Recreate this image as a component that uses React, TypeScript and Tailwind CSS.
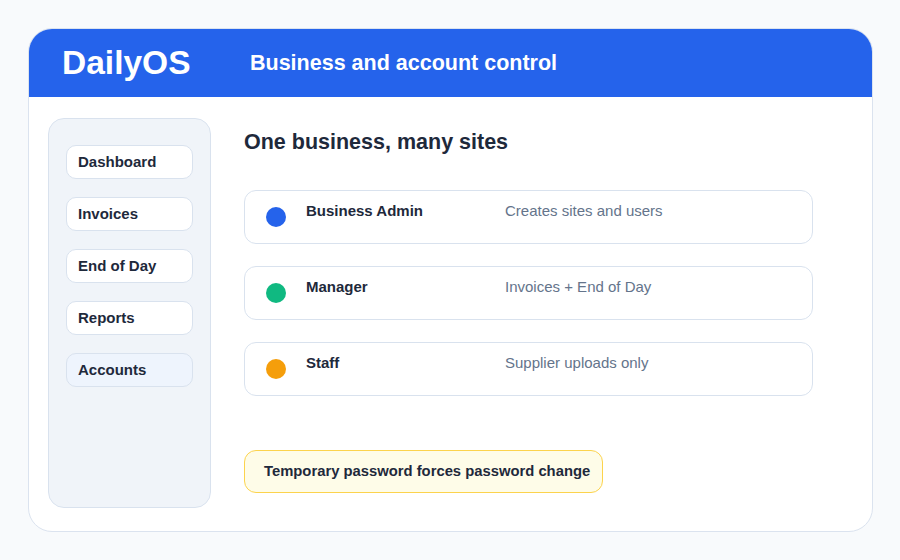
const navItems = ["Dashboard", "Invoices", "End of Day", "Reports", "Accounts"];

const roles = [
  { name: "Business Admin", desc: "Creates sites and users", dot: "bg-[#2563eb]" },
  { name: "Manager", desc: "Invoices + End of Day", dot: "bg-[#10b981]" },
  { name: "Staff", desc: "Supplier uploads only", dot: "bg-[#f59e0b]" },
];

export default function App() {
  return (
    <div className="w-[900px] h-[560px] bg-[#f8fafc] pt-[28px] pl-[28px] font-['Liberation_Sans',Arial,sans-serif] text-[#1e293b]">
      <div className="w-[845px] h-[504px] bg-white rounded-[24px] border border-[#dbe3ef] overflow-hidden flex flex-col">
        {/* header */}
        <div className="h-[69px] -mx-px -mt-px bg-[#2563eb] flex items-center pl-[34px] text-white font-bold shrink-0">
          <span className="w-[188px] text-[33.5px] leading-none">DailyOS</span>
          <span className="pt-[3px] text-[21.5px] leading-none">Business and account control</span>
        </div>

        <div className="flex flex-1 pl-[19px] pt-[21px] pb-[23px]">
          {/* sidebar */}
          <div className="w-[163px] bg-[#f0f4f9] border border-[#d9e2ee] rounded-[16px] px-[17px] pt-[26px] flex flex-col gap-[18px]">
            {navItems.map((item) => (
              <div
                key={item}
                className={
                  "h-[34px] rounded-[10px] border border-[#d9e2ee] flex items-center pl-[11px] text-[15px] font-bold " +
                  (item === "Accounts" ? "bg-[#eef4fd]" : "bg-white")
                }
              >
                {item}
              </div>
            ))}
          </div>

          {/* main */}
          <div className="ml-[33px] flex flex-col">
            <h1 className="mt-[10px] text-[21.5px] leading-[28px] font-bold">One business, many sites</h1>

            <div className="mt-[34px] flex flex-col gap-[22px]">
              {roles.map((r) => (
                <div
                  key={r.name}
                  className="w-[569px] h-[54px] rounded-[12px] border border-[#d9e2ee] flex items-center pl-[21px]"
                >
                  <span className={"w-[20px] h-[20px] rounded-full shrink-0 " + r.dot} />
                  <span className="self-start pt-[10px] ml-[20px] w-[199px] text-[15px] leading-[20px] font-bold">
                    {r.name}
                  </span>
                  <span className="self-start pt-[10px] text-[15px] leading-[20px] text-[#64748b]">{r.desc}</span>
                </div>
              ))}
            </div>

            <div className="mt-[54px] w-[359px] h-[43px] rounded-[12px] border border-[#fcd34d] bg-[#fefce8] flex items-center pl-[19px] text-[14.8px] font-bold">
              Temporary password forces password change
            </div>
          </div>
        </div>
      </div>
    </div>
  );
}
